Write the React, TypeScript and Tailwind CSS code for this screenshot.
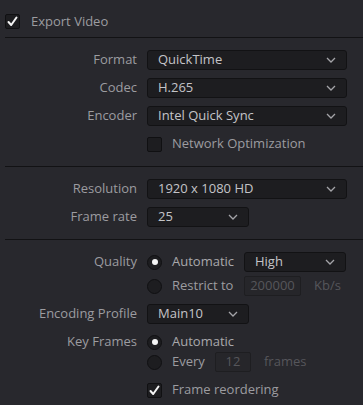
import type { ReactNode } from "react";

const font = { fontFamily: '"Open Sans", "Noto Sans", sans-serif' };

const Chevron = () => (
  <svg width="10" height="6" viewBox="0 0 10 6" className="shrink-0">
    <polyline points="1,1 5,5 9,1" fill="none" stroke="#a4a4a8" strokeWidth="1.3" />
  </svg>
);

const Select = ({ value, width }: { value: string; width: string }) => (
  <div
    className={`flex h-5 items-center justify-between rounded-[3px] border border-[#121214] bg-[#1d1d20] pl-[10px] pr-[10px] text-[13px] text-[#c4c4c8] ${width}`}
  >
    <span>{value}</span>
    <Chevron />
  </div>
);

const Checkbox = ({ checked }: { checked?: boolean }) => (
  <div className="flex h-[15px] w-[15px] shrink-0 items-center justify-center rounded-[2px] border border-[#101012] bg-[#1d1d20]">
    {checked && (
      <svg width="11" height="11" viewBox="0 0 11 11">
        <path d="M1.5 6 L4.2 9 L9.5 1.5" fill="none" stroke="#f4f4f4" strokeWidth="2" strokeLinecap="round" strokeLinejoin="round" />
      </svg>
    )}
  </div>
);

const Radio = ({ checked }: { checked?: boolean }) => (
  <div className="flex h-[15px] w-[15px] shrink-0 items-center justify-center rounded-full border border-[#101012] bg-[#1d1d20]">
    {checked && <div className="h-[6px] w-[6px] rounded-full bg-[#f4f4f4]" />}
  </div>
);

const DimInput = ({ value, width }: { value: string; width: string }) => (
  <div
    className={`flex h-5 items-center justify-center rounded-[2px] border border-[#1e1e21] bg-[#26262a] text-[13px] text-[#56565b] ${width}`}
  >
    {value}
  </div>
);

const Row = ({ label, className = "", children }: { label?: string; className?: string; children: ReactNode }) => (
  <div className={`flex h-5 items-center ${className}`}>
    <div className="w-[137px] shrink-0 text-right text-[13px] text-[#9c9ca0]">{label}</div>
    <div className="ml-[10px] flex items-center">{children}</div>
  </div>
);

const Divider = () => <div className="ml-[5px] h-px bg-[#121214]" />;

export default function App() {
  return (
    <div className="h-[405px] w-[363px] overflow-hidden bg-[#28282d]" style={font}>
      <div className="flex h-[37px] items-center gap-[11px] pl-[5px] pt-[6px]">
        <Checkbox checked />
        <span className="text-[13px] text-[#9c9ca0]">Export Video</span>
      </div>
      <Divider />

      <div className="pb-[12px] pt-[12px]">
        <Row label="Format">
          <Select value="QuickTime" width="w-[200px]" />
        </Row>
        <Row label="Codec" className="mt-2">
          <Select value="H.265" width="w-[200px]" />
        </Row>
        <Row label="Encoder" className="mt-2">
          <Select value="Intel Quick Sync" width="w-[200px]" />
        </Row>
        <Row className="mt-2">
          <Checkbox />
          <span className="ml-[10px] text-[13px] text-[#9c9ca0]">Network Optimization</span>
        </Row>
      </div>
      <Divider />

      <div className="pb-[12px] pt-[12px]">
        <Row label="Resolution">
          <Select value="1920 x 1080 HD" width="w-[200px]" />
        </Row>
        <Row label="Frame rate" className="mt-2">
          <Select value="25" width="w-[102px]" />
        </Row>
      </div>
      <Divider />

      <div className="pt-[12px]">
        <Row label="Quality">
          <Radio checked />
          <span className="ml-[10px] w-[72px] text-[13px] text-[#a8a8ac]">Automatic</span>
          <Select value="High" width="w-[102px]" />
        </Row>
        <Row className="mt-1">
          <Radio />
          <span className="ml-[10px] w-[72px] text-[13px] text-[#9c9ca0]">Restrict to</span>
          <DimInput value="200000" width="w-[57px]" />
          <span className="ml-[13px] text-[13px] text-[#56565b]">Kb/s</span>
        </Row>
        <Row label="Encoding Profile" className="mt-2">
          <Select value="Main10" width="w-[102px]" />
        </Row>
        <Row label="Key Frames" className="mt-2">
          <Radio checked />
          <span className="ml-[10px] text-[13px] text-[#a8a8ac]">Automatic</span>
        </Row>
        <Row>
          <Radio />
          <span className="ml-[10px] w-[43px] text-[13px] text-[#9c9ca0]">Every</span>
          <DimInput value="12" width="w-[36px]" />
          <span className="ml-[13px] text-[13px] text-[#56565b]">frames</span>
        </Row>
        <Row className="mt-2">
          <Checkbox checked />
          <span className="ml-[10px] text-[13px] text-[#9c9ca0]">Frame reordering</span>
        </Row>
      </div>
    </div>
  );
}
